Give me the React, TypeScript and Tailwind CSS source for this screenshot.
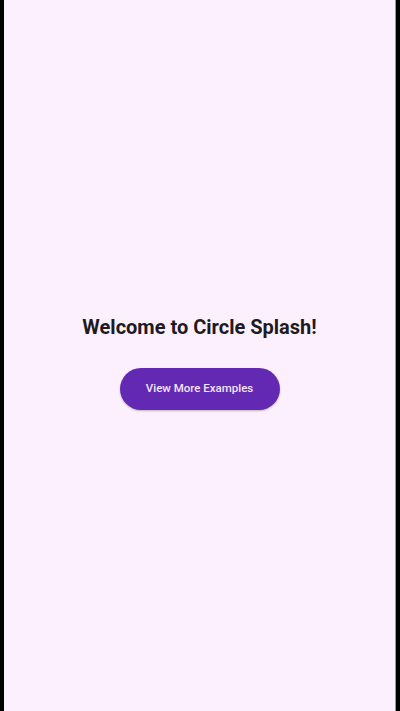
import React from "react";

export default function App() {
  return (
    <div className="flex h-[711px] w-[400px] bg-black" style={{ fontFamily: "Roboto, 'Noto Sans', sans-serif" }}>
      <div className="ml-[4px] flex w-[391px] flex-col items-center justify-center bg-[#fdf0fe] pt-[12px]">
        <h1 className="text-[20px] font-bold leading-[28px] text-[#1d1b20]">Welcome to Circle Splash!</h1>
        <button className="mt-[27px] h-[42px] w-[160px] rounded-full bg-[#6429b2] text-[11.5px] font-medium text-[#f1e6fb] shadow-[0_1px_2px_rgba(0,0,0,0.25)]">
          View More Examples
        </button>
      </div>
      <div className="w-[1px] bg-[#9a949c]" />
    </div>
  );
}
